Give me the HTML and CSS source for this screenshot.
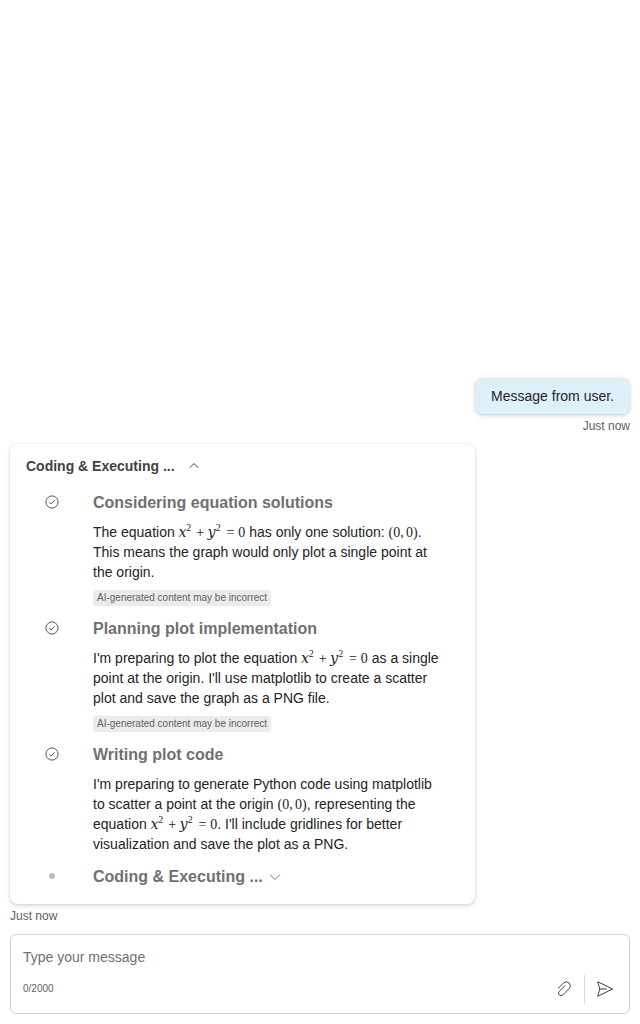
FILE: index.html
```html
<!DOCTYPE html>
<html lang="en">
<head>
<meta charset="utf-8">
<title>Chat</title>
<link rel="stylesheet" href="styles.css">
</head>
<body>
<main class="chat">
  <section class="user-message">
    <div class="bubble">Message from user.</div>
    <div class="time">Just now</div>
  </section>
  <section class="bot-message">
    <div class="card">
      <div class="card-title">Coding &amp; Executing ...
        <svg class="chevron-up" width="12" height="12" viewBox="0 0 12 12"><path d="M1.8 7.8 6 3.5l4.2 4.3"/></svg>
      </div>
      <div class="step">
        <svg class="check" width="14" height="14" viewBox="0 0 14 14"><circle cx="7" cy="7" r="6.1"/><path d="m4.4 7.3 1.7 1.6 3.5-3.5"/></svg>
        <div class="step-body">
          <h3>Considering equation solutions</h3>
          <p>The equation <math><msup><mi>x</mi><mn>2</mn></msup><mo>+</mo><msup><mi>y</mi><mn>2</mn></msup><mo>=</mo><mn>0</mn></math> has only one solution: <math><mo stretchy="false">(</mo><mn>0</mn><mo separator="true">,</mo><mn>0</mn><mo stretchy="false">)</mo></math>.<br>This means the graph would only plot a single point at<br>the origin.</p>
          <span class="badge">AI-generated content may be incorrect</span>
        </div>
      </div>
      <div class="step">
        <svg class="check" width="14" height="14" viewBox="0 0 14 14"><circle cx="7" cy="7" r="6.1"/><path d="m4.4 7.3 1.7 1.6 3.5-3.5"/></svg>
        <div class="step-body">
          <h3>Planning plot implementation</h3>
          <p>I'm preparing to plot the equation <math><msup><mi>x</mi><mn>2</mn></msup><mo>+</mo><msup><mi>y</mi><mn>2</mn></msup><mo>=</mo><mn>0</mn></math> as a single<br>point at the origin. I'll use matplotlib to create a scatter<br>plot and save the graph as a PNG file.</p>
          <span class="badge">AI-generated content may be incorrect</span>
        </div>
      </div>
      <div class="step">
        <svg class="check" width="14" height="14" viewBox="0 0 14 14"><circle cx="7" cy="7" r="6.1"/><path d="m4.4 7.3 1.7 1.6 3.5-3.5"/></svg>
        <div class="step-body">
          <h3>Writing plot code</h3>
          <p>I'm preparing to generate Python code using matplotlib<br>to scatter a point at the origin <math><mo stretchy="false">(</mo><mn>0</mn><mo separator="true">,</mo><mn>0</mn><mo stretchy="false">)</mo></math>, representing the<br>equation <math><msup><mi>x</mi><mn>2</mn></msup><mo>+</mo><msup><mi>y</mi><mn>2</mn></msup><mo>=</mo><mn>0</mn></math>. I'll include gridlines for better<br>visualization and save the plot as a PNG.</p>
        </div>
      </div>
      <div class="step">
        <span class="dot"></span>
        <div class="step-body">
          <h3>Coding &amp; Executing ...<svg class="chevron-down" width="12" height="12" viewBox="0 0 12 12"><path d="M1.1 3.7 6 8.6l4.9-4.9"/></svg></h3>
        </div>
      </div>
    </div>
    <div class="time">Just now</div>
  </section>
  <div class="composer">
    <div class="placeholder">Type your message</div>
    <div class="toolbar">
      <span class="count">0/2000</span>
      <svg class="clip" width="20" height="20" viewBox="0 0 20 20"><path d="m4 9.4 5.8-5.5a3.9 3.9 0 0 1 5.6 5.4l-6.6 6.6a2.5 2.5 0 0 1-3.6-3.5l6-5.9"/></svg>
      <span class="divider"></span>
      <svg class="send" width="20" height="20" viewBox="0 0 20 20"><path d="M2.7 2.7 17.6 10 2.7 17.3 4.8 10ZM4.8 10h7"/></svg>
    </div>
  </div>
</main>
</body>
</html>
```
FILE: styles.css
```css
* { box-sizing: border-box; }
body {
  margin: 0;
  background: #fff;
  color: #242424;
  font: 14px/20px "Liberation Sans", Arial, sans-serif;
}
.chat {
  height: 1024px;
  padding: 0 10px 10px;
  display: flex;
  flex-direction: column;
  justify-content: flex-end;
}
.bubble, .card {
  border-radius: 8px;
  box-shadow: 0 0 2px rgba(0, 0, 0, .12), 0 2px 4px rgba(0, 0, 0, .14);
}
.user-message {
  display: flex;
  flex-direction: column;
  align-items: flex-end;
  margin-bottom: 10px;
}
.bubble {
  padding: 8px 16px;
  background: #def1fb;
}
.time {
  margin-top: 4px;
  font-size: 12px;
  line-height: 16px;
  color: #616161;
}
.card {
  width: 465px;
  height: 460px;
  padding: 12px 16px;
}
.card-title {
  display: flex;
  align-items: center;
  gap: 13px;
  font-weight: 700;
  color: #424242;
  margin-bottom: 15px;
}
svg {
  fill: none;
  stroke: #424242;
  stroke-width: 1;
  flex: none;
}
.step {
  display: grid;
  grid-template-columns: 52px 1fr;
  justify-items: center;
  column-gap: 15px;
  margin-bottom: 10px;
}
.step-body { justify-self: stretch; }
.check { margin-top: 4px; stroke-width: .9; }
h3 {
  margin: 0;
  padding-top: 1px;
  display: flex;
  align-items: center;
  gap: 6px;
  font-size: 16px;
  line-height: 22px;
  color: #707070;
}
p { margin: 8px 0; height: 60px; white-space: nowrap; }
.step:nth-last-child(2) p { height: 80px; margin-bottom: 0; }
.step:nth-last-child(2) { margin-bottom: 11px; }
math { font-family: "Liberation Serif", serif; }
mi {
  margin: 0 -1.2px;
  font-family: "DejaVu Math TeX Gyre", "DejaVu Serif", serif;
}
.badge {
  display: block;
  width: 178px;
  height: 16px;
  margin-bottom: 1px;
  padding: 0 4px;
  border-radius: 3px;
  background: #ebebeb;
  color: #616161;
  font-size: 10px;
  line-height: 15px;
  white-space: nowrap;
}
.dot {
  width: 6px;
  height: 6px;
  margin-top: 8px;
  border-radius: 50%;
  background: #bdbdbd;
}
.chevron-down { stroke: #707070; }
.composer {
  height: 80px;
  margin-top: 10px;
  padding: 12px 14px 0 12px;
  border: 1px solid #d1d1d1;
  border-radius: 6px;
}
.placeholder { color: #707070; }
.toolbar {
  display: flex;
  align-items: center;
  height: 28px;
  margin-top: 8px;
}
.count {
  flex: 1;
  font-size: 10px;
  line-height: 14px;
  color: #616161;
}
.divider {
  width: 1px;
  height: 28px;
  margin: 0 10px;
  background: #d9d9d9;
}
```
